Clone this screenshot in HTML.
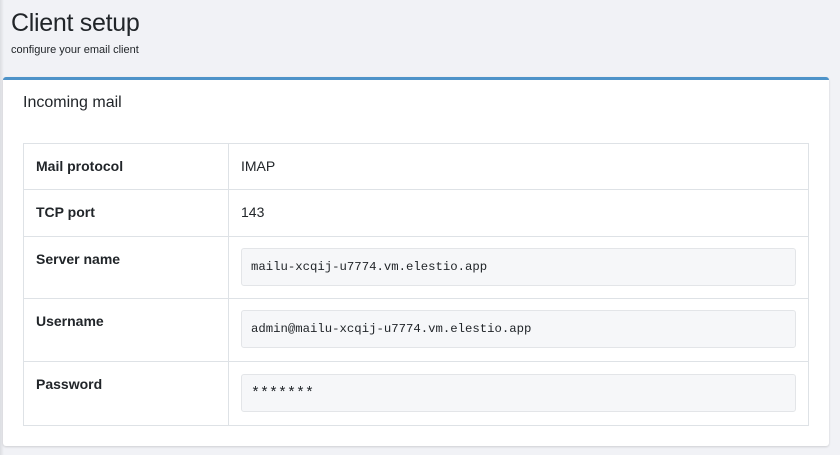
<!DOCTYPE html>
<html><head><style>
*{margin:0;padding:0;box-sizing:border-box}
body{width:840px;height:455px;background:#f1f2f6;font-family:"Liberation Sans",Arial,sans-serif;color:#212529;position:relative;overflow:hidden}
.sh{position:absolute;left:0;top:0;width:4px;height:455px;background:linear-gradient(to right,#dcdde1,#f1f2f6)}
h1{position:absolute;left:11px;top:9px;font-size:25px;font-weight:400;letter-spacing:-0.3px}
.sub{position:absolute;left:11px;top:44px;font-size:11px}
.card{position:absolute;left:3px;top:77px;width:826px;height:369px;background:#fff;border-top:3px solid #4e93c9;border-radius:3px;box-shadow:0 1px 2px rgba(0,0,0,.15)}
.ct{position:absolute;left:20px;top:14px;font-size:16px}
table{position:absolute;left:20px;top:63px;width:786px;border-collapse:collapse;font-size:14px}
td{border:1px solid #dee2e6;vertical-align:top;padding:14px 12px}
td.l{width:205px;font-weight:bold}
pre{font-family:"Liberation Mono",monospace;font-size:12.3px;background:#f6f7f9;border:1px solid #e3e5e8;border-radius:3px;padding:10px 9px;height:38px;line-height:17px;margin:0 0 -3px}
pre.pw{font-size:15px;line-height:19px;padding-top:9px}
</style></head><body>
<div class="sh"></div>
<h1>Client setup</h1>
<div class="sub">configure your email client</div>
<div class="card">
<div class="ct">Incoming mail</div>
<table>
<tr style="height:46px"><td class="l">Mail protocol</td><td>IMAP</td></tr>
<tr style="height:47px"><td class="l">TCP port</td><td>143</td></tr>
<tr style="height:62px"><td class="l">Server name</td><td style="padding-top:11px"><pre>mailu-xcqij-u7774.vm.elestio.app</pre></td></tr>
<tr style="height:63px"><td class="l">Username</td><td style="padding-top:11px"><pre>admin@mailu-xcqij-u7774.vm.elestio.app</pre></td></tr>
<tr style="height:64px"><td class="l">Password</td><td style="padding-top:12px"><pre class="pw">*******</pre></td></tr>
</table>
</div>
</body></html>
